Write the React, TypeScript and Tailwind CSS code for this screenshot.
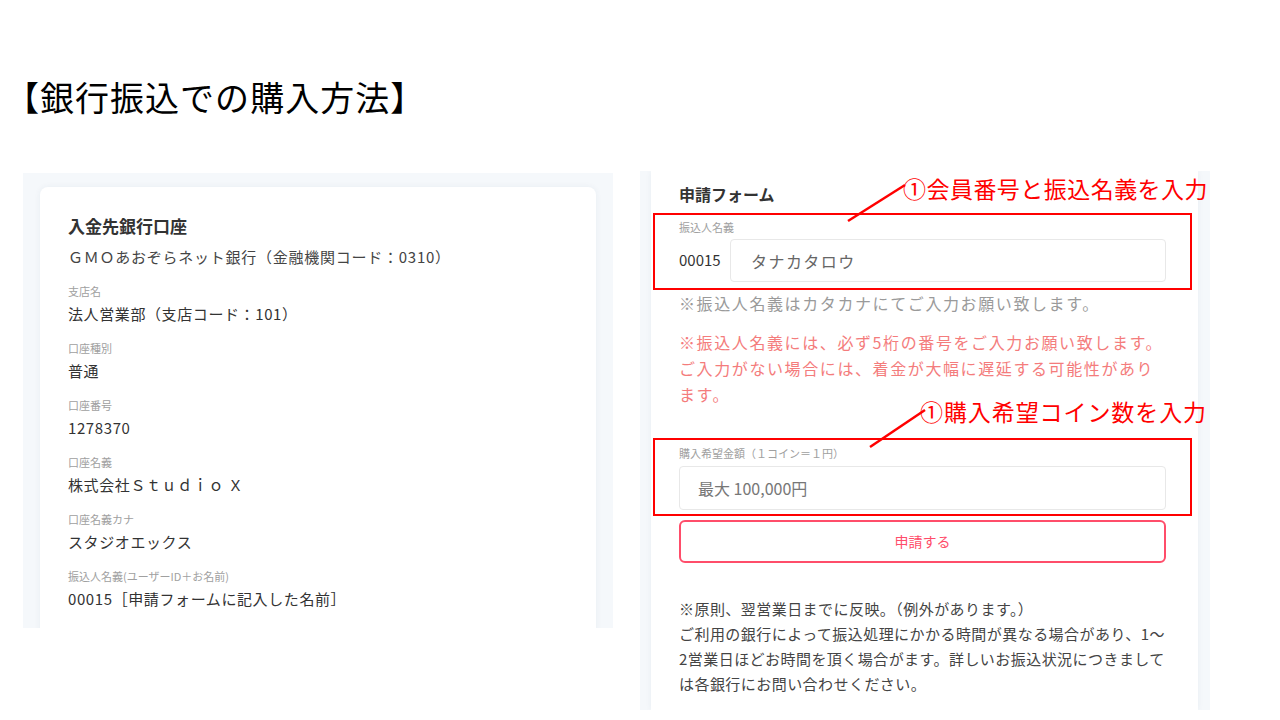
import React from 'react';

const font = { fontFamily: '"Noto Sans CJK JP", "Noto Sans", sans-serif' };

const accountRows = [
  { label: '支店名', value: '法人営業部（支店コード：101）' },
  { label: '口座種別', value: '普通' },
  { label: '口座番号', value: '1278370' },
  { label: '口座名義', value: '株式会社Ｓｔｕｄｉｏ Ｘ' },
  { label: '口座名義カナ', value: 'スタジオエックス' },
  { label: '振込人名義(ユーザーID＋お名前)', value: '00015［申請フォームに記入した名前］' },
];

function AccountPanel() {
  return (
    <div className="mt-[2px] w-[590px] h-[455px] overflow-hidden bg-[#f5f8fb] px-[17px] pt-[14px]">
      <div className="h-[480px] rounded-lg bg-white pl-[28px] pt-[26px] shadow-[0_0_6px_rgba(30,60,100,0.06)]">
        <h2 className="text-[17px] leading-[25px] font-bold text-[#333]">入金先銀行口座</h2>
        <p className="mt-[7px] text-[15px] leading-[24px] tracking-[0.05em] text-[#444]">ＧＭＯあおぞらネット銀行（金融機関コード：0310）</p>
        <div className="mt-[14px] flex flex-col gap-[14px]">
          {accountRows.map((row) => (
            <div key={row.label} className="flex flex-col gap-[3px]">
              <span className="text-[11px] leading-[16px] text-[#a0a0a0]">{row.label}</span>
              <span className="text-[15px] leading-[24px] tracking-[0.04em] text-[#333]">{row.value}</span>
            </div>
          ))}
        </div>
      </div>
    </div>
  );
}

function FormPanel() {
  return (
    <div className="w-[570px] h-[539px] overflow-hidden bg-[#f5f8fb] pl-[11px] pr-[12px]">
      <div className="h-full bg-white pl-[28px] pt-[11px] shadow-[0_0_6px_rgba(30,60,100,0.06)]">
        <h2 className="text-[16px] leading-[24px] font-bold text-[#333]">申請フォーム</h2>
        <p className="mt-[13px] text-[11px] leading-[16px] text-[#a0a0a0]">振込人名義</p>
        <div className="mt-[4px] flex items-center">
          <span className="w-[51px] text-[15px] text-[#333]">00015</span>
          <div className="flex h-[43px] w-[436px] items-center rounded border border-[#e8e8e8] pl-[20px] text-[16px] tracking-[0.09em] text-[#666]">
            タナカタロウ
          </div>
        </div>
        <p className="mt-[9px] text-[16px] leading-[24px] tracking-[0.1em] text-[#9a9a9a]">※振込人名義はカタカナにてご入力お願い致します。</p>
        <p className="mt-[14px] text-[16px] leading-[26px] tracking-[0.1em] text-[#f47c7c]">
          ※振込人名義には、必ず5桁の番号をご入力お願い致します。
          <br />
          ご入力がない場合には、着金が大幅に遅延する可能性があり
          <br />
          ます。
        </p>
        <p className="mt-[38px] text-[11px] leading-[16px] text-[#a0a0a0]">購入希望金額（１コイン＝１円）</p>
        <div className="mt-[5px] flex h-[44px] w-[487px] items-center rounded border border-[#e8e8e8] pl-[18px] text-[16px] text-[#777]">
          最大 100,000円
        </div>
        <button className="mt-[10px] flex h-[43px] w-[487px] items-center justify-center rounded-md border-2 border-[#ff4d6a] text-[14px] text-[#ff4d6a]">
          申請する
        </button>
        <p className="mt-[33px] text-[15px] leading-[25px] tracking-[0.03em] text-[#444]">
          ※原則、翌営業日までに反映。（例外があります。）
          <br />
          ご利用の銀行によって振込処理にかかる時間が異なる場合があり、1〜
          <br />
          2営業日ほどお時間を頂く場合がます。詳しいお振込状況につきまして
          <br />
          は各銀行にお問い合わせください。
        </p>
      </div>
    </div>
  );
}

export default function App() {
  return (
    <div className="relative h-[720px] w-[1280px] overflow-hidden bg-white" style={font}>
      <h1 className="pl-[5px] pt-[72px] text-[34px] leading-[50px] tracking-[0.03em] font-normal text-black">【銀行振込での購入方法】</h1>
      <div className="mt-[49px] flex items-start pl-[23px] gap-[27px]">
        <AccountPanel />
        <FormPanel />
      </div>

      {/* annotations */}
      <div className="absolute left-[653px] top-[213px] h-[77px] w-[539px] border-2 border-[#ff0000]" />
      <div className="absolute left-[653px] top-[438px] h-[78px] w-[539px] border-2 border-[#ff0000]" />
      <svg className="absolute left-0 top-0" width="1280" height="720">
        <line x1="848" y1="221" x2="905" y2="185" stroke="#ff0000" strokeWidth="2.5" />
        <line x1="870" y1="447" x2="925" y2="410" stroke="#ff0000" strokeWidth="2.5" />
      </svg>
      <span className="absolute left-[903px] top-[172px] text-[23px] leading-[32px] tracking-[0.02em] text-[#ff0000]">①会員番号と振込名義を入力</span>
      <span className="absolute left-[920px] top-[395px] text-[23px] leading-[32px] tracking-[0.04em] text-[#ff0000]">①購入希望コイン数を入力</span>
    </div>
  );
}
